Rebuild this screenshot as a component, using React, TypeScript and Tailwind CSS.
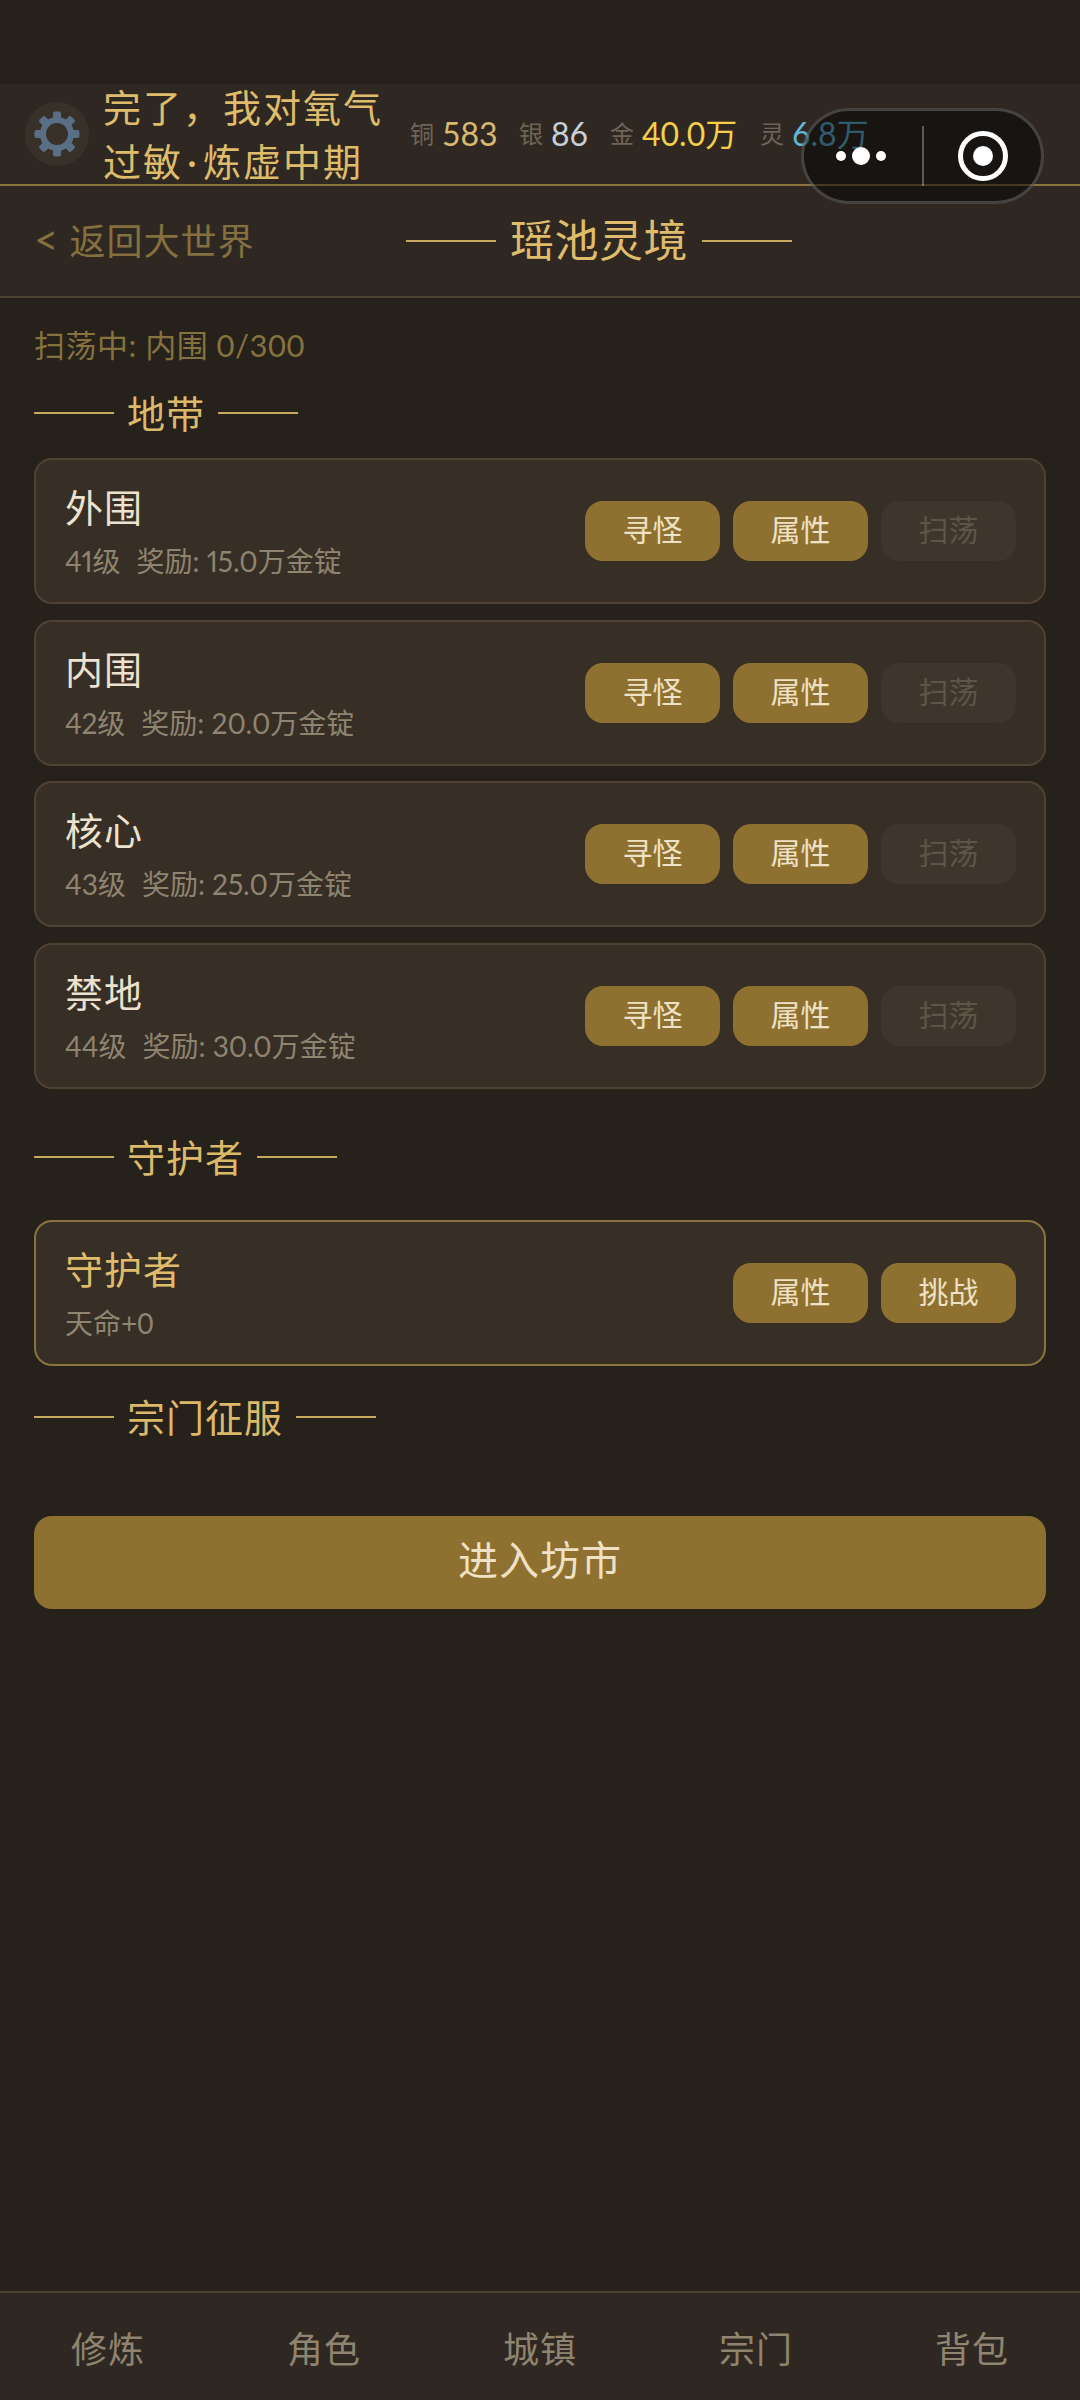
import { ReactNode } from 'react';

const zones = [
  { name: '外围', info: '41级', reward: '奖励: 15.0万金锭' },
  { name: '内围', info: '42级', reward: '奖励: 20.0万金锭' },
  { name: '核心', info: '43级', reward: '奖励: 25.0万金锭' },
  { name: '禁地', info: '44级', reward: '奖励: 30.0万金锭' },
];

const stats = [
  { label: '铜', value: '583', color: 'text-[#d9b970]', width: 'w-[109px]' },
  { label: '银', value: '86', color: 'text-[#c9cdd6]', width: 'w-[91px]' },
  { label: '金', value: '40.0万', color: 'text-[#f5cf4c]', width: 'w-[150px]' },
  { label: '灵', value: '6.8万', color: 'text-[#62b5d8]', width: 'w-[110px]' },
];

const tabs = ['修炼', '角色', '城镇', '宗门', '背包'];

function GearIcon() {
  return (
    <svg width="46" height="46" viewBox="0 0 46 46" fill="none">
      {[0, 45, 90, 135, 180, 225, 270, 315].map((deg) => (
        <rect key={deg} x="19" y="0.5" width="8" height="10" rx="2" fill="#5a6f86" transform={`rotate(${deg} 23 23)`} />
      ))}
      <circle cx="23" cy="23" r="14" stroke="#5a6f86" strokeWidth="6" />
    </svg>
  );
}

function SectionTitle({ children, className }: { children: ReactNode; className: string }) {
  return (
    <div className={`flex items-center gap-[13px] h-[50px] ${className}`}>
      <span className="w-[80px] h-[2px] bg-[#c9a85f]"></span>
      <span className="text-[38px] leading-[50px] tracking-[1px] text-[#dcb96a]">{children}</span>
      <span className="w-[80px] h-[2px] bg-[#c9a85f]"></span>
    </div>
  );
}

function ActionButton({ label, disabled }: { label: string; disabled?: boolean }) {
  return (
    <button
      className={`w-[135px] h-[60px] pb-[3px] rounded-[18px] text-[30px] leading-[57px] text-center ${
        disabled ? 'bg-[#3e362d] text-[#5f5547]' : 'bg-[#8e7130] text-[#eee1c5]'
      }`}
    >
      {label}
    </button>
  );
}

export default function App() {
  return (
    <div
      className="relative w-[1080px] h-[2400px] flex flex-col bg-[#26211b] overflow-hidden"
      style={{ fontFamily: 'Lato, "Noto Sans CJK SC", "Noto Sans", sans-serif' }}
    >
      {/* top bar */}
      <div className="mt-[84px] h-[102px] flex items-center pl-[25px] bg-[#2f2822] border-b-2 border-[#8b7340]">
        <div className="w-[64px] h-[64px] shrink-0 rounded-full bg-[#383129] flex items-center justify-center">
          <GearIcon />
        </div>
        <div className="ml-[14px] w-[307px] shrink-0 text-[38px] leading-[54px] tracking-[2px] text-[#dfbc6c]">
          <div>完了，我对氧气</div>
          <div>
            过敏<span className="mx-[4px]">·</span>炼虚中期
          </div>
        </div>
        <div className="flex items-center">
          {stats.map((s) => (
            <div key={s.label} className={`flex items-center gap-[8px] ${s.width}`}>
              <span className="text-[24px] leading-[34px] text-[#6f6556]">{s.label}</span>
              <span className={`text-[32px] leading-[40px] whitespace-nowrap ${s.color}`}>{s.value}</span>
            </div>
          ))}
        </div>
      </div>

      {/* sub header */}
      <div className="h-[112px] flex items-center pl-[34px] bg-[#2f2822] border-b-2 border-[#4d4130]">
        <span className="w-[372px] shrink-0 mb-[3px] text-[36px] leading-[50px] tracking-[1px] text-[#84703f]">
          <span className="text-[42px]">&lt;</span> 返回大世界
        </span>
        <div className="flex items-center gap-[14px]">
          <span className="w-[90px] h-[2px] bg-[#c9a85f]"></span>
          <span className="mb-[3px] text-[44px] leading-[60px] tracking-[0.5px] text-[#dfbc6c]">瑶池灵境</span>
          <span className="w-[90px] h-[2px] bg-[#c9a85f]"></span>
        </div>
      </div>

      {/* content */}
      <div className="flex flex-col px-[34px]">
        <div className="mt-[27px] text-[31px] leading-[40px] tracking-[0.5px] text-[#85723f]">扫荡中: 内围 0/300</div>
        <SectionTitle className="mt-[23px]">地带</SectionTitle>
        <div className="mt-[20px] flex flex-col gap-[15.5px]">
          {zones.map((z) => (
            <div
              key={z.name}
              className="h-[146px] flex items-center justify-between pl-[29px] pr-[28px] rounded-[18px] bg-[#372e26] border-2 border-[#4f4232]"
            >
              <div>
                <div className="text-[38px] leading-[52px] tracking-[1px] text-[#ece2cf]">{z.name}</div>
                <div className="mt-[8px] text-[28px] leading-[40px] proportional-nums text-[#8f8470] flex gap-[16px]">
                  <span>{z.info}</span>
                  <span>{z.reward}</span>
                </div>
              </div>
              <div className="flex gap-[13px]">
                <ActionButton label="寻怪" />
                <ActionButton label="属性" />
                <ActionButton label="扫荡" disabled />
              </div>
            </div>
          ))}
        </div>

        <SectionTitle className="mt-[43px]">守护者</SectionTitle>

        <div className="mt-[38px] h-[146px] flex items-center justify-between pl-[29px] pr-[28px] rounded-[18px] bg-[#372e26] border-2 border-[#8b7340]">
          <div>
            <div className="text-[38px] leading-[52px] tracking-[1px] text-[#dfbc6c]">守护者</div>
            <div className="mt-[8px] text-[28px] leading-[40px] text-[#8f8470]">天命+0</div>
          </div>
          <div className="flex gap-[13px]">
            <ActionButton label="属性" />
            <ActionButton label="挑战" />
          </div>
        </div>

        <SectionTitle className="mt-[26px]">宗门征服</SectionTitle>

        <button className="mt-[74px] h-[93px] pb-[4px] rounded-[18px] bg-[#8e7130] text-[40px] leading-[89px] tracking-[1px] text-[#eee1c5]">
          进入坊市
        </button>
      </div>

      {/* bottom tabs */}
      <div className="mt-auto h-[109px] grid grid-cols-5 items-center bg-[#2f2822] border-t-2 border-[#4d4130]">
        {tabs.map((t) => (
          <div key={t} className="pt-[4px] text-center text-[36px] leading-[50px] tracking-[1px] text-[#8f8470]">
            {t}
          </div>
        ))}
      </div>

      {/* mini program capsule */}
      <div className="absolute left-[801px] top-[108px] w-[243px] h-[96px] flex items-center rounded-full bg-black/50 border-[3px] border-white/20">
        <div className="w-[118px] pr-[5px] flex items-center justify-center gap-[6px]">
          <span className="w-[10px] h-[10px] rounded-full bg-white"></span>
          <span className="w-[18px] h-[18px] rounded-full bg-white"></span>
          <span className="w-[10px] h-[10px] rounded-full bg-white"></span>
        </div>
        <span className="w-[2px] h-[60px] bg-white/30"></span>
        <div className="flex-1 flex items-center justify-center">
          <span className="w-[50px] h-[50px] rounded-full border-[5px] border-white flex items-center justify-center">
            <span className="w-[20px] h-[20px] rounded-full bg-white"></span>
          </span>
        </div>
      </div>
    </div>
  );
}
